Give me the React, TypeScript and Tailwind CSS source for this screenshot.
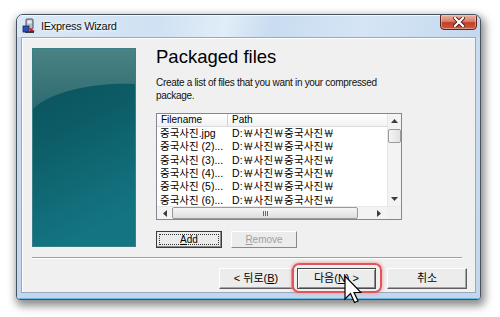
import React from "react";

const LATIN = { fontFamily: '"Liberation Sans", Arial, sans-serif' };
const KR = { fontFamily: '"Liberation Sans", "Noto Sans CJK KR", sans-serif' };

const rows = [
  "중국사진.jpg",
  "중국사진 (2)...",
  "중국사진 (3)...",
  "중국사진 (4)...",
  "중국사진 (5)...",
  "중국사진 (6)...",
  "중국사진 (7)...",
];

function AppIcon() {
  return (
    <svg width="15" height="16" viewBox="0 0 15 16">
      <rect x="4" y="1" width="7" height="10" rx="1" fill="#b8bcc4" stroke="#4a4f5a" strokeWidth="1" />
      <rect x="5.5" y="2.5" width="4" height="3" fill="#e8ecf2" />
      <rect x="1" y="8" width="6" height="6" fill="#2c4fb0" stroke="#1a2a60" strokeWidth="0.8" />
      <path d="M8 10 L13 13 L8 15 Z" fill="#c8202a" />
      <rect x="3" y="13" width="9" height="2" fill="#3a3a3a" />
    </svg>
  );
}

function CloseButton() {
  return (
    <div className="absolute right-[3px] top-[-1px] w-[37px] h-[16px] rounded-b-[4px] rounded-t-[2px] border border-[#5c2418] bg-[linear-gradient(to_bottom,#eab4a4_0%,#d9806a_45%,#c0402a_55%,#d0583e_100%)] flex items-center justify-center shadow-[inset_0_0_0_1px_rgba(255,220,210,0.45)]">
      <svg width="12" height="10" viewBox="0 0 12 10">
        <path d="M2 1 L10 9 M10 1 L2 9" stroke="#4a1a14" strokeWidth="4" strokeLinecap="square" />
        <path d="M2 1 L10 9 M10 1 L2 9" stroke="#ffffff" strokeWidth="2.2" strokeLinecap="square" />
      </svg>
    </div>
  );
}

function TealPanel() {
  return (
    <div className="w-[104px] h-[199px] border border-[#3a7e86] overflow-hidden">
      <svg width="102" height="197" viewBox="0 0 102 197">
        <defs>
          <linearGradient id="base" x1="0" y1="0" x2="0.25" y2="1">
            <stop offset="0" stopColor="#0a4f58" />
            <stop offset="0.45" stopColor="#0c5c66" />
            <stop offset="1" stopColor="#137582" />
          </linearGradient>
          <linearGradient id="hl" x1="0" y1="0" x2="0" y2="1">
            <stop offset="0" stopColor="#4a8384" />
            <stop offset="1" stopColor="#2c6a70" />
          </linearGradient>
        </defs>
        <rect width="102" height="197" fill="url(#base)" />
        <path d="M0 0 H102 V35 C70 33 20 40 0 60 Z" fill="url(#hl)" />
      </svg>
    </div>
  );
}

function ClassicButton({
  children,
  w,
  isDefault = false,
}: {
  children: React.ReactNode;
  w: string;
  isDefault?: boolean;
}) {
  return (
    <div
      className={
        "h-[21px] flex items-center justify-center bg-[#ececec] text-[11px] text-black " +
        w +
        (isDefault
          ? " border border-[#4a4a4a] shadow-[inset_1px_1px_0_#ffffff,inset_-1px_-1px_0_#8a8a8a]"
          : " border-t border-l border-t-[#ffffff] border-l-[#ffffff] border-r border-b border-r-[#5e5e5e] border-b-[#5e5e5e] shadow-[inset_-1px_-1px_0_#a6a6a6]")
      }
      style={KR}
    >
      {children}
    </div>
  );
}

function ListView() {
  return (
    <div className="w-[246px] h-[107px] border border-[#828790] bg-white flex flex-col">
      <div className="flex flex-1 min-h-0">
        <div className="w-[230px] flex flex-col overflow-hidden">
          <div className="h-[13px] shrink-0 flex bg-[linear-gradient(to_bottom,#ffffff,#f1f2f4)] border-b border-[#dcdcdc] text-[10px] leading-[12px] text-black" style={LATIN}>
            <div className="w-[71px] pl-[4px] border-r border-[#cfd2d6]">Filename</div>
            <div className="pl-[4px]">Path</div>
          </div>
          {rows.map((r, i) => (
            <div key={i} className="h-[13.3px] shrink-0 flex items-center text-[10.5px] leading-[13px] text-black whitespace-nowrap" style={KR}>
              <div className="w-[72px] pl-[3px] overflow-hidden">{r}</div>
              <div className="pl-[3px] tracking-[0.2px]">D:￦사진￦중국사진￦</div>
            </div>
          ))}
        </div>
        <div className="w-[14px] bg-[#f3f3f3] border-l border-[#e6e6e6] flex flex-col items-center">
          <div className="h-[14px] flex items-center justify-center">
            <svg width="7" height="4" viewBox="0 0 7 4"><path d="M0 4 L3.5 0 L7 4 Z" fill="#3c3c3c" /></svg>
          </div>
          <div className="w-[13px] h-[14px] mt-[1px] rounded-[2px] border border-[#9a9a9a] bg-[linear-gradient(to_right,#f4f4f4,#e2e2e2)]" />
          <div className="flex-1" />
          <div className="h-[14px] flex items-center justify-center">
            <svg width="7" height="4" viewBox="0 0 7 4"><path d="M0 0 L3.5 4 L7 0 Z" fill="#3c3c3c" /></svg>
          </div>
        </div>
      </div>
      <div className="h-[13px] flex bg-[#f3f3f3] border-t border-[#e8e8e8]">
        <div className="w-[15px] flex items-center justify-center">
          <svg width="4" height="7" viewBox="0 0 4 7"><path d="M4 0 L0 3.5 L4 7 Z" fill="#3c3c3c" /></svg>
        </div>
        <div className="w-[186px] h-[12px] rounded-[2px] border border-[#9a9a9a] bg-[linear-gradient(to_bottom,#f6f6f6,#dedede)] flex items-center justify-center gap-[1px]">
          <div className="w-[1px] h-[5px] bg-[#6a6a6a]" />
          <div className="w-[1px] h-[5px] bg-[#6a6a6a]" />
          <div className="w-[1px] h-[5px] bg-[#6a6a6a]" />
        </div>
        <div className="w-[29px] flex items-center justify-end pr-[6px]">
          <svg width="4" height="7" viewBox="0 0 4 7"><path d="M0 0 L4 3.5 L0 7 Z" fill="#3c3c3c" /></svg>
        </div>
        <div className="w-[14px] bg-[#f0f0f0]" />
      </div>
    </div>
  );
}

function Window() {
  return (
    <div className="relative w-[465px] h-[286px] rounded-t-[7px] rounded-b-[4px] border border-[#46525e] bg-[#c6dbf0] shadow-[2px_4px_9px_2px_rgba(0,0,0,0.45)] flex flex-col overflow-hidden">
      <div className="relative h-[22px] flex items-center pl-[5px] bg-[linear-gradient(100deg,#dbe8f6_0%,#cfe1f3_30%,#e1edf8_45%,#c9dcf0_55%,#d5e5f5_75%,#c3d8ee_100%)] shadow-[inset_0_1px_0_#f4f9fe]">
        <AppIcon />
        <span className="ml-[4px] text-[11px] tracking-[-0.3px] text-[#111] [text-shadow:0_0_6px_#ffffff,0_0_3px_#ffffff]" style={{ fontFamily: '"Liberation Sans", Arial, sans-serif' }}>
          IExpress Wizard
        </span>
        <CloseButton />
      </div>
      <div className="flex-1 flex flex-col bg-[linear-gradient(to_bottom,#cadcf0,#c2d7ee)]">
        <div className="ml-[4px] w-[455px] h-[256px] border border-[#97a9bc] bg-[#f0f0f0] shadow-[inset_1px_1px_0_#ffffff] flex flex-col">
          <div className="flex pl-[10px] pt-[10px]">
            <TealPanel />
            <div className="ml-[20px] w-[250px] flex flex-col">
              <div className="-mt-[2px] h-[22px] text-[18.5px] leading-[22px] text-black" style={LATIN}>
                Packaged files
              </div>
              <div className="mt-[9px] text-[10px] leading-[12.5px] tracking-[-0.3px] text-[#111]" style={LATIN}>
                Create a list of files that you want in your compressed
                <br />
                package.
              </div>
              <div className="mt-[11px]">
                <ListView />
              </div>
              <div className="mt-[11px] flex gap-[9px] text-[10px]" style={LATIN}>
                <div className="w-[66px] h-[17px] border border-[#3c3c3c] bg-[#ececec] flex items-center justify-center p-[2px] shadow-[inset_-1px_-1px_0_#8a8a8a]">
                  <div className="w-full h-full border border-dotted border-[#333] flex items-center justify-center leading-[10px]">
                    <span><span className="underline">A</span>dd</span>
                  </div>
                </div>
                <div className="w-[66px] h-[17px] border-t border-l border-[#ffffff] border-r border-b border-r-[#8a8a8a] border-b-[#8a8a8a] bg-[#ececec] flex items-center justify-center text-[#a0a0a0]">
                  <span><span className="underline">R</span>emove</span>
                </div>
              </div>
            </div>
          </div>
          <div className="mt-[9px] ml-[10px] w-[430px] h-[2px] border-t border-[#a0a0a0] border-b border-b-white" />
          <div className="mt-[9px] flex justify-end pr-[8px]">
            <ClassicButton w="w-[74px]">
              &lt; 뒤로(<span className="underline">B</span>)
            </ClassicButton>
            <div className="w-[4px]" />
            <ClassicButton w="w-[79px]" isDefault>
              다음(<span className="underline">N</span>) &gt;
            </ClassicButton>
            <div className="w-[11px]" />
            <ClassicButton w="w-[80px]">취소</ClassicButton>
          </div>
        </div>
      </div>
      <div className="absolute left-0 right-0 bottom-0 h-[1px] bg-[#6fb8e6]" />
    </div>
  );
}

export default function App() {
  return (
    <div className="relative w-[500px] h-[317px] bg-white overflow-hidden">
      <div className="pt-[14px] pl-[16px]">
        <Window />
      </div>
      <div className="absolute left-[292px] top-[263px] w-[90px] h-[30px] rounded-[7px] border-2 border-[#e2545c] shadow-[0_0_3px_1px_rgba(240,150,150,0.7)]" />
      <svg className="absolute left-[344px] top-[275px]" width="18" height="30" viewBox="0 0 18 30">
        <path d="M1 1 L1 24 L6.5 18.5 L10.5 27.5 L14 26 L10 17.5 L17 17.5 Z" fill="#ffffff" stroke="#000000" strokeWidth="1.2" strokeLinejoin="miter" />
      </svg>
    </div>
  );
}
